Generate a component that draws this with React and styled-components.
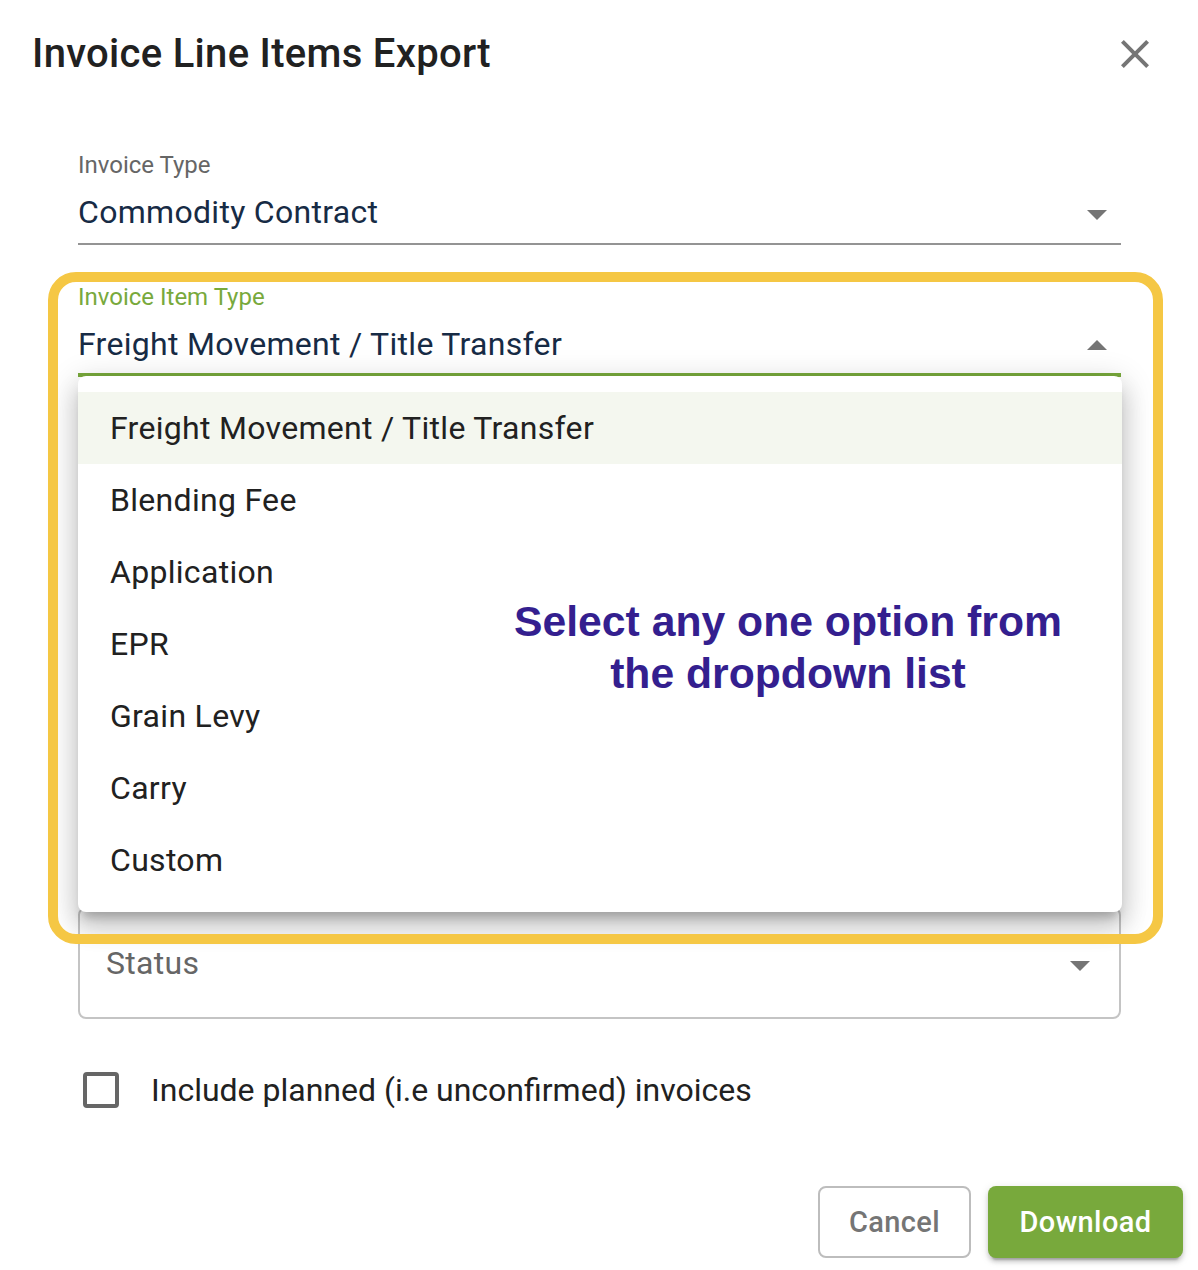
import React from "react";
import styled, { createGlobalStyle } from "styled-components";

const GlobalStyle = createGlobalStyle`
  html, body { margin: 0; padding: 0; background: #ffffff; }
  body { font-family: Roboto, "Noto Sans", Arial, sans-serif; }
  *, *::before, *::after { box-sizing: border-box; }
`;

const GREEN = "#78a93c";
const NAVY = "#172b45";

const Dialog = styled.div`
  position: relative;
  width: 1198px;
  height: 1270px;
  background: #ffffff;
  overflow: hidden;
`;

const Header = styled.header`
  display: flex;
  align-items: center;
  justify-content: space-between;
  height: 78px;
  padding: 30px 39px 0 32px;
`;

const Title = styled.h2`
  margin: 0;
  font-family: Roboto, sans-serif;
  font-weight: 500;
  font-size: 40px;
  line-height: 48px;
  letter-spacing: 0.3px;
  color: #212121;
`;

const CloseButton = styled.button`
  width: 48px;
  height: 48px;
  padding: 0;
  border: 0;
  background: transparent;
  display: flex;
  align-items: center;
  justify-content: center;
  color: #757575;
  cursor: pointer;
`;

const Content = styled.div`
  display: flex;
  flex-direction: column;
  padding: 75px 77px 0 78px;
`;

const Field = styled.div`
  position: relative;
  margin-top: ${(p) => p.$mt || 0}px;
  z-index: ${(p) => (p.$open ? 2 : 1)};
`;

const FieldLabel = styled.div`
  font-size: 24px;
  line-height: 24px;
  margin-bottom: 12px;
  color: ${(p) => (p.$focused ? GREEN : "#666666")};
`;

const SelectRow = styled.div`
  display: flex;
  align-items: center;
  justify-content: space-between;
  padding-bottom: ${(p) => (p.$focused ? 6 : 8)}px;
  border-bottom: ${(p) => (p.$focused ? `4px solid ${GREEN}` : "2px solid #949494")};
`;

const Value = styled.span`
  font-size: 32px;
  line-height: 46px;
  letter-spacing: 0.3px;
  color: ${NAVY};
`;

const ArrowIcon = styled.svg`
  width: 48px;
  height: 48px;
  margin: 1px 0 -3px;
  fill: #757575;
  transform: ${(p) => (p.$up ? "rotate(180deg)" : "none")};
  flex: none;
`;

const Outlined = styled.div`
  display: flex;
  align-items: center;
  justify-content: space-between;
  height: ${(p) => p.$h}px;
  margin-top: ${(p) => p.$mt || 0}px;
  padding: 0 15px 0 26px;
  border: 2px solid #c4c4c4;
  border-radius: 8px;
`;

const Placeholder = styled.span`
  font-size: 32px;
  line-height: 46px;
  letter-spacing: 0.3px;
  color: #666666;
`;

const Menu = styled.ul`
  position: absolute;
  left: 0;
  right: -1px;
  top: calc(100% - 1px);
  margin: 0;
  padding: 16px 0;
  list-style: none;
  background: #ffffff;
  border-radius: 8px;
  box-shadow: 0px 10px 10px -5px rgba(0, 0, 0, 0.2),
    0px 16px 24px 2px rgba(0, 0, 0, 0.14),
    0px 6px 30px 5px rgba(0, 0, 0, 0.12);
`;

const MenuItem = styled.li`
  display: flex;
  align-items: center;
  height: 72px;
  padding: 0 32px;
  font-size: 32px;
  line-height: 48px;
  letter-spacing: 0.3px;
  color: #212121;
  background: ${(p) => (p.$selected ? "#f4f7ef" : "transparent")};
`;

const Annotation = styled.div`
  position: absolute;
  left: 430px;
  top: 219px;
  width: 560px;
  text-align: center;
  font-family: "Liberation Sans", Arial, sans-serif;
  font-weight: 700;
  font-size: 42.7px;
  line-height: 52px;
  color: #341f8f;
  pointer-events: none;
`;

const Highlight = styled.div`
  position: absolute;
  left: 48px;
  top: 272px;
  width: 1115px;
  height: 672px;
  border: 10px solid #f5c744;
  border-radius: 28px;
  z-index: 3;
  pointer-events: none;
`;

const CheckRow = styled.label`
  display: flex;
  align-items: center;
  gap: 32px;
  margin-top: 48px;
  padding-left: 5px;
`;

const CheckBox = styled.span`
  width: 36px;
  height: 36px;
  border: 4px solid #666666;
  border-radius: 4px;
  flex: none;
`;

const CheckText = styled.span`
  font-size: 32px;
  line-height: 46px;
  color: #212121;
`;

const Actions = styled.div`
  display: flex;
  justify-content: flex-end;
  gap: 17px;
  margin-top: 73px;
  padding-right: 15px;
`;

const Button = styled.button`
  height: 72px;
  width: ${(p) => p.$w}px;
  border-radius: 8px;
  font-family: Roboto, sans-serif;
  font-weight: 500;
  font-size: 29px;
  letter-spacing: 0.4px;
  cursor: pointer;
  border: ${(p) => (p.$primary ? "0" : "2px solid #bdbdbd")};
  background: ${(p) => (p.$primary ? GREEN : "#ffffff")};
  color: ${(p) => (p.$primary ? "#ffffff" : "#757575")};
  box-shadow: ${(p) =>
    p.$primary
      ? "0px 6px 2px -4px rgba(0,0,0,0.2), 0px 4px 4px 0px rgba(0,0,0,0.14), 0px 2px 10px 0px rgba(0,0,0,0.12)"
      : "none"};
`;

const Arrow = ({ up }) => (
  <ArrowIcon viewBox="0 0 24 24" $up={up}>
    <path d="M7 10l5 5 5-5z" />
  </ArrowIcon>
);

const StandardSelect = ({ label, value, focused, open, mt, children }) => (
  <Field $mt={mt} $open={open}>
    <FieldLabel $focused={focused}>{label}</FieldLabel>
    <SelectRow $focused={focused}>
      <Value>{value}</Value>
      <Arrow up={open} />
    </SelectRow>
    {children}
  </Field>
);

const items = [
  "Freight Movement / Title Transfer",
  "Blending Fee",
  "Application",
  "EPR",
  "Grain Levy",
  "Carry",
  "Custom",
];

export default function App() {
  return (
    <>
      <GlobalStyle />
      <Dialog>
        <Header>
          <Title>Invoice Line Items Export</Title>
          <CloseButton aria-label="close">
            <svg width="48" height="48" viewBox="0 0 24 24" fill="currentColor">
              <path d="M19 6.41L17.59 5 12 10.59 6.41 5 5 6.41 10.59 12 5 17.59 6.41 19 12 13.41 17.59 19 19 17.59 13.41 12z" />
            </svg>
          </CloseButton>
        </Header>

        <Content>
          <StandardSelect label="Invoice Type" value="Commodity Contract" />
          <StandardSelect
            label="Invoice Item Type"
            value="Freight Movement / Title Transfer"
            focused
            open
            mt={40}
          >
            <Menu>
              {items.map((it, i) => (
                <MenuItem key={it} $selected={i === 0}>
                  {it}
                </MenuItem>
              ))}
              <Annotation>
                Select any one option from
                <br />
                the dropdown list
              </Annotation>
            </Menu>
          </StandardSelect>

          <Outlined $h={100} $mt={243} />
          <Outlined $h={100} $mt={40} />
          <Outlined $h={112} $mt={47}>
            <Placeholder>Status</Placeholder>
            <Arrow />
          </Outlined>

          <CheckRow>
            <CheckBox />
            <CheckText>Include planned (i.e unconfirmed) invoices</CheckText>
          </CheckRow>
        </Content>

        <Actions>
          <Button $w={153}>Cancel</Button>
          <Button $w={195} $primary>
            Download
          </Button>
        </Actions>

        <Highlight />
      </Dialog>
    </>
  );
}
